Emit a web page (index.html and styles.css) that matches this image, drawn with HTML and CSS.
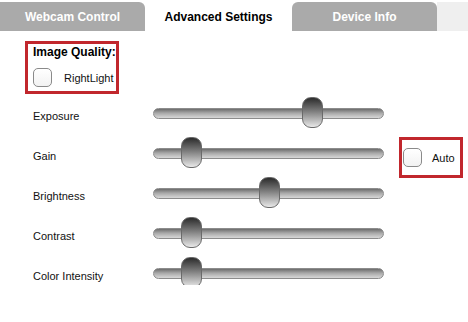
FILE: index.html
```html
<!DOCTYPE html>
<html lang="en">
<head>
  <meta charset="UTF-8">
  <meta name="viewport" content="width=device-width, initial-scale=1">
  <title>Advanced Settings</title>
  <link rel="stylesheet" href="styles.css">
</head>
<body>
  <!-- Pestañas -->
  <div class="tabs">
    <div class="tab tab-first">Webcam Control</div>
    <div class="tab active">Advanced Settings</div>
    <div class="tab tab-last">Device Info</div>
    <div class="tab-filler"></div>
  </div>

  <div class="panel">
    <!-- Calidad de imagen -->
    <div class="quality highlight">
      <div class="quality-title">Image Quality:</div>
      <label class="check-row">
        <span class="checkbox"></span>
        <span>RightLight</span>
      </label>
    </div>

    <!-- Controles deslizantes -->
    <div class="sliders">
      <div class="label">Exposure</div>
      <div class="slider"><div class="track"></div><div class="thumb" style="left: 149px"></div></div>
      <div></div>

      <div class="label">Gain</div>
      <div class="slider"><div class="track"></div><div class="thumb" style="left: 28px"></div></div>
      <label class="auto highlight">
        <span class="checkbox"></span>
        <span>Auto</span>
      </label>

      <div class="label">Brightness</div>
      <div class="slider"><div class="track"></div><div class="thumb" style="left: 106px"></div></div>
      <div></div>

      <div class="label">Contrast</div>
      <div class="slider"><div class="track"></div><div class="thumb" style="left: 28px"></div></div>
      <div></div>

      <div class="label">Color Intensity</div>
      <div class="slider"><div class="track"></div><div class="thumb" style="left: 28px"></div></div>
      <div></div>
    </div>
  </div>
</body>
</html>
```

FILE: styles.css
```css
* {
  box-sizing: border-box;
  margin: 0;
  padding: 0;
}

body {
  background-color: #fff;
  color: #111;
  font-family: 'Liberation Sans', Arial, sans-serif;
  font-size: 11px;
}

/* Pestañas */
.tabs {
  display: flex;
  margin-top: 2px;
  height: 29px;
}

.tab {
  width: 145px;
  display: flex;
  align-items: center;
  justify-content: center;
  font-size: 12px;
  font-weight: bold;
  color: #fff;
  background-color: #aaa;
  padding-top: 1px;
}

.tab-first {
  border-radius: 0 6px 0 0;
}

.tab-last {
  border-radius: 6px 6px 0 0;
}

.tab.active {
  width: 147px;
  background-color: #fff;
  color: #000;
}

.tab-filler {
  flex: 1;
  background-color: #efefef;
}

/* Panel de ajustes */
.panel {
  height: 254px;
  overflow: hidden;
  padding: 10px 0 0 25px;
}

.highlight {
  border: 3px solid #c1272d;
}

.quality {
  width: 94px;
  height: 53px;
  padding: 1px 0 0 5px;
}

.quality-title {
  font-size: 12px;
  font-weight: bold;
  line-height: 14px;
  color: #000;
}

.check-row {
  display: flex;
  align-items: center;
  gap: 12px;
  margin-top: 9px;
}

.checkbox {
  width: 19px;
  height: 19px;
  border: 1px solid #8a8a8a;
  border-radius: 5px;
  background: linear-gradient(#fff, #f2f2f2);
  flex: none;
}

.sliders {
  display: grid;
  grid-template-columns: 120px 231px auto;
  grid-auto-rows: 40px;
  padding-left: 8px;
  margin-top: -1px;
}

.label {
  display: flex;
  align-items: center;
  padding-top: 6px;
}

.slider {
  position: relative;
  display: flex;
  align-items: center;
}

.track {
  width: 100%;
  height: 11px;
  border: 1px solid #8c8c8c;
  border-radius: 6px;
  background: linear-gradient(#6c6c6c, #a8a8a8 45%, #d8d8d8);
}

.thumb {
  position: absolute;
  top: 50%;
  width: 21px;
  height: 31px;
  margin-top: -16px;
  border: 1px solid #6a6a6a;
  border-radius: 9px;
  background: linear-gradient(#2c2c2c, #7c7c7c 45%, #e8e8e8);
}

.auto {
  display: flex;
  align-items: center;
  gap: 10px;
  align-self: start;
  width: 64px;
  height: 41px;
  margin: 4px 0 0 15px;
  padding-left: 1px;
}
```
